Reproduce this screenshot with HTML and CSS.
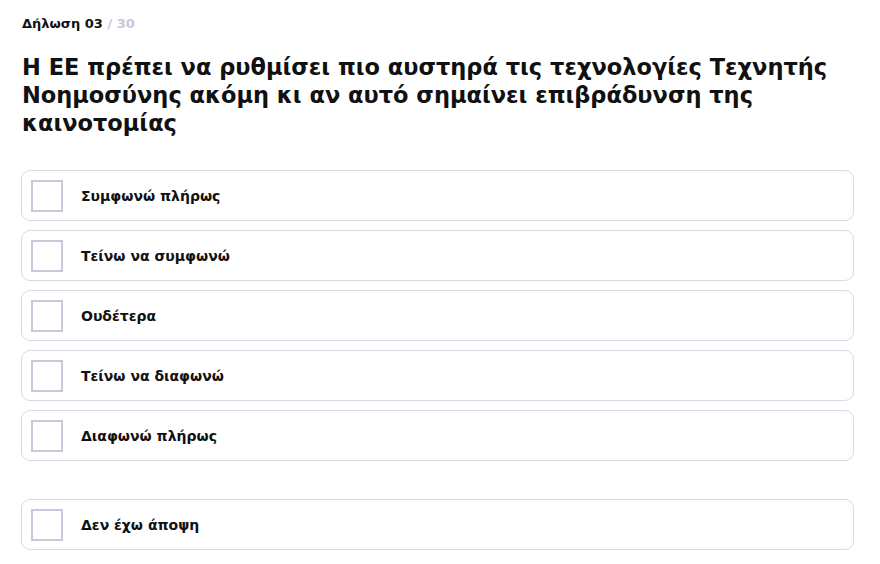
FILE: index.html
```html
<!DOCTYPE html>
<html lang="el">
<head>
<meta charset="utf-8">
<link rel="stylesheet" href="styles.css">
</head>
<body>
<main class="page">
  <div class="counter"><span class="current">Δήλωση 03</span> <span class="total">/ 30</span></div>
  <h1 class="statement">Η ΕΕ πρέπει να ρυθμίσει πιο αυστηρά τις τεχνολογίες Τεχνητής Νοημοσύνης ακόμη κι αν αυτό σημαίνει επιβράδυνση της καινοτομίας</h1>
  <div class="options">
    <label class="option"><span class="box"></span><span class="text">Συμφωνώ πλήρως</span></label>
    <label class="option"><span class="box"></span><span class="text">Τείνω να συμφωνώ</span></label>
    <label class="option"><span class="box"></span><span class="text">Ουδέτερα</span></label>
    <label class="option"><span class="box"></span><span class="text">Τείνω να διαφωνώ</span></label>
    <label class="option"><span class="box"></span><span class="text">Διαφωνώ πλήρως</span></label>
  </div>
  <div class="options extra">
    <label class="option"><span class="box"></span><span class="text">Δεν έχω άποψη</span></label>
  </div>
</main>
</body>
</html>
```
FILE: styles.css
```css
html, body {
  margin: 0;
  padding: 0;
  background: #ffffff;
}
body {
  font-family: "DejaVu Sans", "Liberation Sans", sans-serif;
  color: #111111;
}
.page {
  padding: 16px 26px 0 21px;
}
.counter {
  font-size: 13px;
  font-weight: bold;
  line-height: 16px;
  padding-left: 1px;
}
.counter .total {
  color: #c9c6d6;
}
.statement {
  margin: 21px 0 0 1px;
  font-size: 22.5px;
  line-height: 28px;
  font-weight: bold;
  color: #111111;
}
.options {
  display: flex;
  flex-direction: column;
  gap: 9px;
  margin-top: 33px;
}
.options.extra {
  margin-top: 38px;
}
.option {
  display: flex;
  align-items: center;
  gap: 18px;
  padding: 9px 9px 8px;
  border: 1px solid #dcd9e5;
  border-radius: 9px;
  background: #ffffff;
}
.box {
  width: 28px;
  height: 28px;
  border: 2px solid #cdc7db;
  flex: none;
}
.text {
  font-size: 14px;
  font-weight: bold;
  color: #111111;
}
```
